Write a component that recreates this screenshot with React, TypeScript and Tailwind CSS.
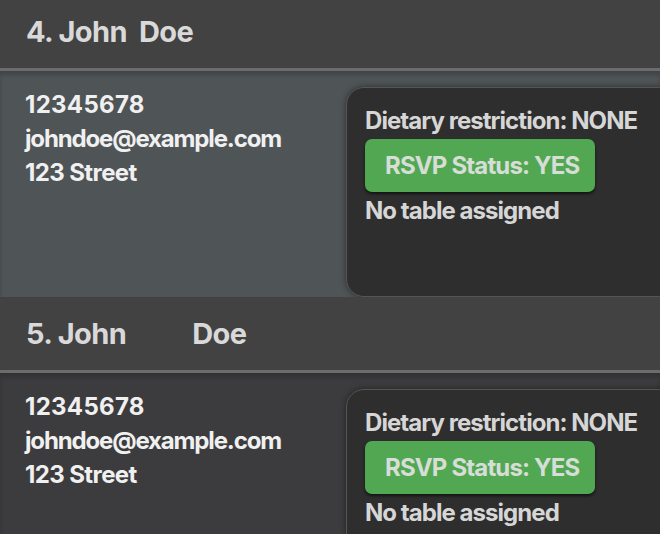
import React from "react";

type Row = { idx: number; gap: string; selected: boolean };

function Header({ idx, gap }: { idx: number; gap: string }) {
  return (
    <div className="h-[73px] shrink-0 bg-[#424242] pl-[26px] flex items-center text-[29px] font-[650] text-[#d9d9d9] tracking-[-0.6px]">
      <span>{idx}. John</span>
      <span className={gap}>Doe</span>
    </div>
  );
}

function Card() {
  return (
    <div className="ml-auto w-[330px] mr-[-16px] mt-[16px] h-[210px] rounded-[18px] border-[1.5px] border-[#555555] bg-[#2e2e2e] shadow-[0_0_6px_rgba(0,0,0,0.45)] pl-[18px] pt-[18px] text-[#d6d6d6] font-[650] text-[24px] tracking-[-0.95px]">
      <div className="leading-[30px]">Dietary restriction: NONE</div>
      <div className="mt-[3px] inline-flex h-[53px] items-center rounded-[7px] bg-[#52a852] pl-[20px] pr-[16px] text-[24px] text-[#d7ddd7] tracking-[-0.85px] shadow-[0_2px_3px_rgba(0,0,0,0.6)]">
        RSVP Status: YES
      </div>
      <div className="mt-[4px] leading-[30px]">No table assigned</div>
    </div>
  );
}

function Entry({ idx, gap, selected }: Row) {
  return (
    <div className="flex flex-col">
      <Header idx={idx} gap={gap} />
      <div className="h-[3px] bg-[#6c6c6c]" />
      <div
        className={
          "h-[226px] flex shadow-[inset_0_4px_4px_rgba(0,0,0,0.18)] " +
          (selected ? "bg-[#4f5457]" : "bg-[#3c3c3e]")
        }
      >
        <div className="pl-[25px] pt-[17px] text-[24px] leading-[34px] font-[650] text-[#f0f0f0]">
          <div className="tracking-[0.3px]">12345678</div>
          <div className="tracking-[-1.15px]">johndoe@example.com</div>
          <div className="tracking-[-0.6px]">123 Street</div>
        </div>
        <Card />
      </div>
    </div>
  );
}

export default function App() {
  return (
    <div
      className="w-[660px] h-[534px] overflow-hidden bg-[#3c3c3e]"
      style={{ fontFamily: "Inter, 'Noto Sans', sans-serif" }}
    >
      <div className="-mt-[5px] flex flex-col">
        <Entry idx={4} gap="ml-[12px]" selected={true} />
        <Entry idx={5} gap="ml-[66px]" selected={false} />
      </div>
    </div>
  );
}
